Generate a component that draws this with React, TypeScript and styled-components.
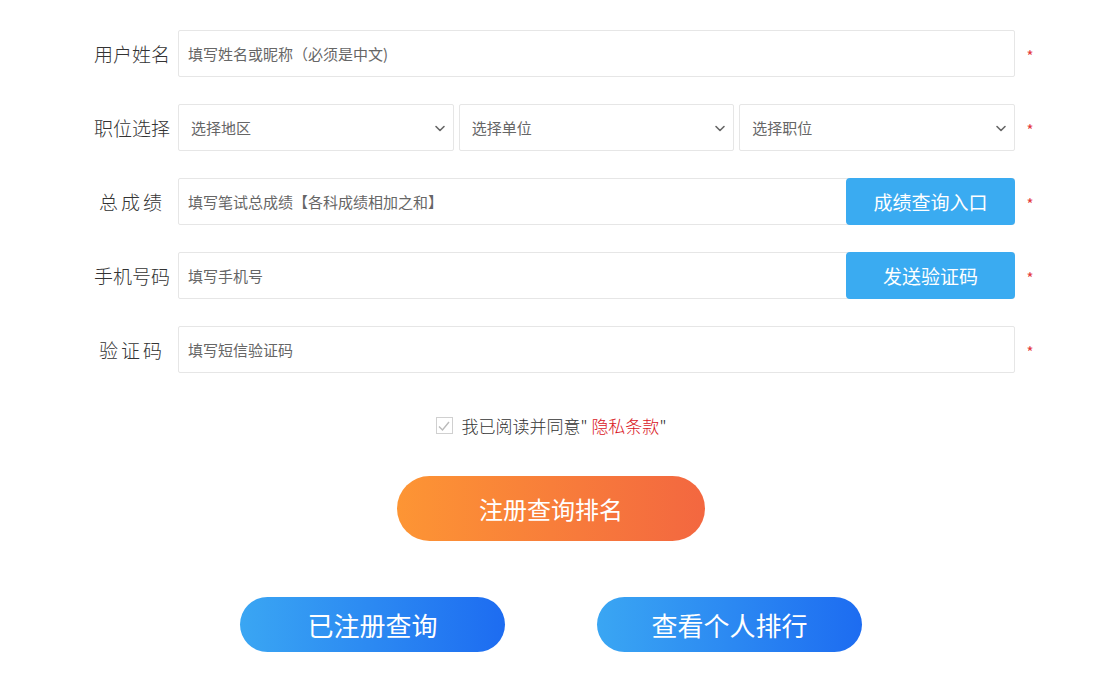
import React from 'react';
import styled, { createGlobalStyle } from 'styled-components';

const GlobalStyle = createGlobalStyle`
  html, body {
    margin: 0;
    padding: 0;
    background: #fff;
    font-family: "Microsoft YaHei", "Noto Sans CJK SC", "Noto Sans", sans-serif;
  }
  * { box-sizing: border-box; }
`;

const Form = styled.div`
  width: 1102px;
  padding: 30px 0 0 90px;
  display: flex;
  flex-direction: column;
`;

const Row = styled.div`
  display: flex;
  align-items: center;
  height: 47px;
  margin-bottom: 27px;
`;

const Label = styled.div<{ $spaced?: boolean }>`
  width: 84px;
  margin-right: 4px;
  text-align: center;
  font-size: 19px;
  font-weight: 300;
  color: #333;
  letter-spacing: ${(p) => (p.$spaced ? '3px' : '0')};
  white-space: nowrap;
`;

const Field = styled.div`
  position: relative;
  width: 837px;
  height: 100%;
  display: flex;
  gap: 5px;
`;

const Input = styled.input`
  flex: 1;
  height: 100%;
  border: 1px solid #e6e6e6;
  border-radius: 2px;
  padding: 0 9px;
  font-family: inherit;
  font-size: 15px;
  color: #333;
  outline: none;
  &::placeholder {
    color: #666;
  }
`;

const Select = styled.div`
  flex: 1;
  height: 100%;
  border: 1px solid #e6e6e6;
  border-radius: 2px;
  padding: 0 6px 0 12px;
  display: flex;
  align-items: center;
  justify-content: space-between;
  font-size: 15px;
  color: #666;
`;

const SideButton = styled.button`
  position: absolute;
  right: 0;
  top: 0;
  width: 169px;
  height: 47px;
  border: none;
  border-radius: 4px;
  background: #3aabf1;
  color: #fff;
  font-family: inherit;
  font-size: 19px;
  cursor: pointer;
`;

const Star = styled.span`
  width: 30px;
  text-align: center;
  color: #e4393c;
  font-size: 15px;
  padding-top: 4px;
`;

const Agree = styled.div`
  display: flex;
  align-items: center;
  justify-content: center;
  margin: 13px 0 0 -90px;
  font-size: 17px;
  font-weight: 300;
  color: #333;
  gap: 9px;
`;

const Box = styled.span`
  width: 17px;
  height: 17px;
  border: 1px solid #d0d0d0;
  display: inline-flex;
  align-items: center;
  justify-content: center;
`;

const Red = styled.span`
  color: #d9141d;
`;

const Pill = styled.button<{ $w: number; $h: number; $from: string; $to: string; $size: number }>`
  width: ${(p) => p.$w}px;
  height: ${(p) => p.$h}px;
  border: none;
  border-radius: ${(p) => p.$h / 2}px;
  background: linear-gradient(90deg, ${(p) => p.$from}, ${(p) => p.$to});
  color: #fff;
  font-family: inherit;
  font-size: ${(p) => p.$size}px;
  cursor: pointer;
`;

const Center = styled.div<{ $top: number }>`
  display: flex;
  justify-content: center;
  gap: 92px;
  margin: ${(p) => p.$top}px 0 0 -90px;
`;

const Chevron = () => (
  <svg width="14" height="14" viewBox="0 0 14 14" fill="none">
    <path d="M3 5.5 L7 9.5 L11 5.5" stroke="#666" strokeWidth="1.6" strokeLinecap="round" strokeLinejoin="round" />
  </svg>
);

const App: React.FC = () => {
  return (
    <>
      <GlobalStyle />
      <Form>
        <Row>
          <Label>用户姓名</Label>
          <Field>
            <Input placeholder="填写姓名或昵称（必须是中文)" />
          </Field>
          <Star>*</Star>
        </Row>
        <Row>
          <Label>职位选择</Label>
          <Field>
            {['选择地区', '选择单位', '选择职位'].map((t) => (
              <Select key={t}>
                {t}
                <Chevron />
              </Select>
            ))}
          </Field>
          <Star>*</Star>
        </Row>
        <Row>
          <Label $spaced>总成绩</Label>
          <Field>
            <Input placeholder="填写笔试总成绩【各科成绩相加之和】" />
            <SideButton>成绩查询入口</SideButton>
          </Field>
          <Star>*</Star>
        </Row>
        <Row>
          <Label>手机号码</Label>
          <Field>
            <Input placeholder="填写手机号" />
            <SideButton>发送验证码</SideButton>
          </Field>
          <Star>*</Star>
        </Row>
        <Row>
          <Label $spaced>验证码</Label>
          <Field>
            <Input placeholder="填写短信验证码" />
          </Field>
          <Star>*</Star>
        </Row>
        <Agree>
          <Box>
            <svg width="14" height="14" viewBox="0 0 14 14" fill="none">
              <path d="M2 7.5 L5.5 11 L12 3" stroke="#bbb" strokeWidth="1.4" />
            </svg>
          </Box>
          <span>
            我已阅读并同意" <Red>隐私条款</Red>"
          </span>
        </Agree>
        <Center $top={38}>
          <Pill $w={308} $h={65} $from="#fd9534" $to="#f36740" $size={24}>
            注册查询排名
          </Pill>
        </Center>
        <Center $top={56}>
          <Pill $w={265} $h={55} $from="#3aa6f3" $to="#1d6cf1" $size={26}>
            已注册查询
          </Pill>
          <Pill $w={265} $h={55} $from="#3aa6f3" $to="#1d6cf1" $size={26}>
            查看个人排行
          </Pill>
        </Center>
      </Form>
    </>
  );
};

export default App;
